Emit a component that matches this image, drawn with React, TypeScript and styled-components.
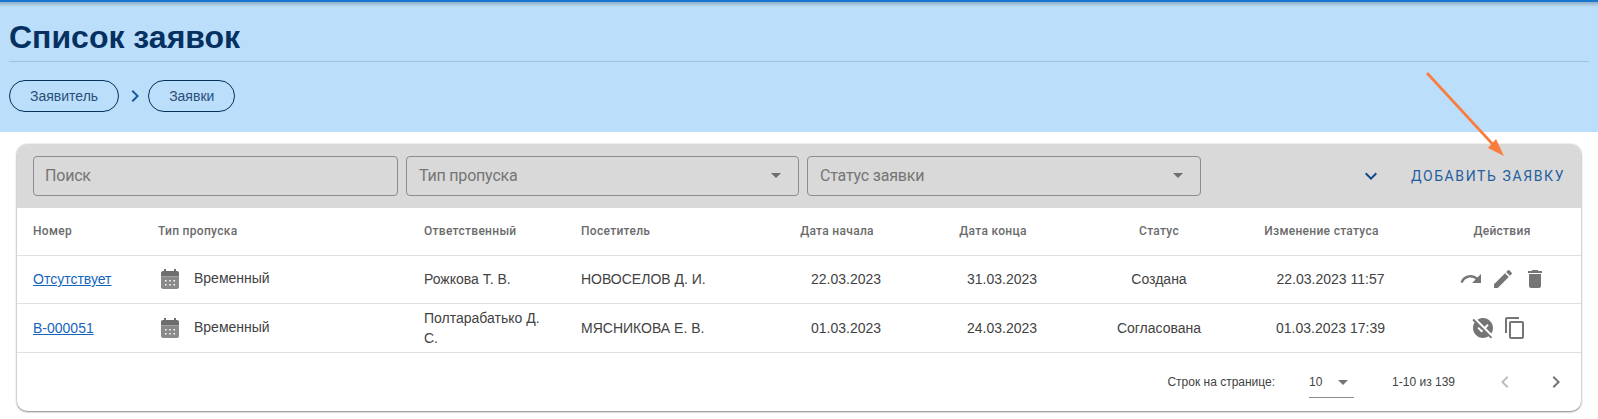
import styled, { createGlobalStyle } from 'styled-components';

const GlobalStyle = createGlobalStyle`
  html, body {
    margin: 0;
    padding: 0;
    background: #fff;
    font-family: 'Liberation Sans', Arial, sans-serif;
  }
`;

const REDO =
  'M18.4 10.6C16.55 8.99 14.15 8 11.5 8c-4.65 0-8.58 3.03-9.96 7.22L3.9 16c1.05-3.19 4.05-5.5 7.6-5.5 1.95 0 3.73.72 5.12 1.88L13 16h9V7l-3.6 3.6z';
const EDIT =
  'M3 17.25V21h3.75L17.81 9.94l-3.75-3.75L3 17.25zM20.71 7.04c.39-.39.39-1.02 0-1.41l-2.34-2.34a.9959.9959 0 0 0-1.41 0l-1.83 1.83 3.75 3.75 1.83-1.83z';
const DELETE = 'M6 19c0 1.1.9 2 2 2h8c1.1 0 2-.9 2-2V7H6v12zM19 4h-3.5l-1-1h-5l-1 1H5v2h14V4z';
const COPY =
  'M16 1H4c-1.1 0-2 .9-2 2v14h2V3h12V1zm3 4H8c-1.1 0-2 .9-2 2v14c0 1.1.9 2 2 2h11c1.1 0 2-.9 2-2V7c0-1.1-.9-2-2-2zm0 16H8V7h11v14z';
const UNPUBLISHED =
  'M21.19 21.19 2.81 2.81 1.39 4.22l2.27 2.27C2.61 8.07 2 9.96 2 12c0 5.52 4.48 10 10 10 2.04 0 3.93-.61 5.51-1.66l2.27 2.27 1.41-1.42zm-10.6-4.59-4.24-4.24 1.41-1.41 2.83 2.83.18-.18 1.41 1.41-1.59 1.59zm3-5.84-7.1-7.1C8.07 2.61 9.96 2 12 2c5.52 0 10 4.48 10 10 0 2.04-.61 3.93-1.66 5.51L15 12.17l2.65-2.65-1.41-1.41-2.65 2.65z';

const Icon = ({ d, size = 24, color = '#757575' }: { d: string; size?: number; color?: string }) => (
  <svg width={size} height={size} viewBox="0 0 24 24" fill={color}>
    <path d={d} />
  </svg>
);

// верх темнее, тело светлее, как в макете
const CalendarIcon = () => (
  <svg width="24" height="24" viewBox="0 0 24 24">
    <path d="M19 4h-1V2h-2v2H8V2H6v2H5c-1.1 0-2 .9-2 2v3.5h18V6c0-1.1-.9-2-2-2z" fill="#6e6e6e" />
    <path
      d="M3 9.5V20c0 1.1.9 2 2 2h14c1.1 0 2-.9 2-2V9.5zm5.5 5H7V13h1.5zm4.25 0h-1.5V13h1.5zm4.25 0h-1.5V13H17zm-8.5 4H7V17h1.5zm4.25 0h-1.5V17h1.5zm4.25 0h-1.5V17H17z"
      fill="#8a8a8a"
      fillRule="evenodd"
    />
  </svg>
);

const columns = [125, 266, 157, 203, 156, 156, 158, 185, 158];

const rows = [
  {
    id: 'Отсутствует',
    person: 'Рожкова Т. В.',
    visitor: 'НОВОСЕЛОВ Д. И.',
    from: '22.03.2023',
    to: '31.03.2023',
    status: 'Создана',
    changed: '22.03.2023 11:57',
    actions: [REDO, EDIT, DELETE],
  },
  {
    id: 'В-000051',
    person: 'Полтарабатько Д. С.',
    visitor: 'МЯСНИКОВА Е. В.',
    from: '01.03.2023',
    to: '24.03.2023',
    status: 'Согласована',
    changed: '01.03.2023 17:39',
    actions: [UNPUBLISHED, COPY],
  },
];

const App = () => (
  <Styled.Page>
    <GlobalStyle />
    <Styled.Hero>
      <Styled.Title>Список заявок</Styled.Title>
      <Styled.Crumbs>
        <Styled.Chip>Заявитель</Styled.Chip>
        <svg width="24" height="24" viewBox="0 0 24 24" fill="#1a5a9c">
          <path d="M10 6 8.59 7.41 13.17 12l-4.58 4.59L10 18l6-6z" />
        </svg>
        <Styled.Chip>Заявки</Styled.Chip>
      </Styled.Crumbs>
    </Styled.Hero>
    <Styled.Card>
      <Styled.Toolbar>
        <Styled.Search>Поиск</Styled.Search>
        <Styled.Select $width={393}>
          Тип пропуска
          <Styled.Caret />
        </Styled.Select>
        <Styled.Select $width={394}>
          Статус заявки
          <Styled.Caret />
        </Styled.Select>
        <Styled.Expand>
          <svg width="24" height="24" viewBox="0 0 24 24" fill="#0d4a8a">
            <path d="M7.41 8.59 12 13.17l4.59-4.58L18 10l-6 6-6-6z" />
          </svg>
        </Styled.Expand>
        <Styled.AddButton>Добавить заявку</Styled.AddButton>
      </Styled.Toolbar>
      <Styled.Table>
        <colgroup>
          {columns.map((w, i) => (
            <col key={i} style={{ width: w }} />
          ))}
        </colgroup>
        <thead>
          <tr>
            <Styled.Th>Номер</Styled.Th>
            <Styled.Th>Тип пропуска</Styled.Th>
            <Styled.Th>Ответственный</Styled.Th>
            <Styled.Th>Посетитель</Styled.Th>
            <Styled.Th $center $sortable>Дата начала</Styled.Th>
            <Styled.Th $center $sortable>Дата конца</Styled.Th>
            <Styled.Th $center>Статус</Styled.Th>
            <Styled.Th $center $sortable>Изменение статуса</Styled.Th>
            <Styled.Th $center>Действия</Styled.Th>
          </tr>
        </thead>
        <tbody>
          {rows.map((row) => (
            <tr key={row.id}>
              <Styled.Td>
                <Styled.Link href="#">{row.id}</Styled.Link>
              </Styled.Td>
              <Styled.Td>
                <Styled.PassType>
                  <CalendarIcon />
                  <span>Временный</span>
                </Styled.PassType>
              </Styled.Td>
              <Styled.Td>{row.person}</Styled.Td>
              <Styled.Td>{row.visitor}</Styled.Td>
              <Styled.Td $center>{row.from}</Styled.Td>
              <Styled.Td $center>{row.to}</Styled.Td>
              <Styled.Td $center>{row.status}</Styled.Td>
              <Styled.Td $center>{row.changed}</Styled.Td>
              <Styled.Td $center>
                <Styled.Actions $compact={row.actions.length < 3}>
                  {row.actions.map((d) => (
                    <Icon key={d} d={d} />
                  ))}
                </Styled.Actions>
              </Styled.Td>
            </tr>
          ))}
        </tbody>
      </Styled.Table>
      <Styled.Pager>
        <span>Строк на странице:</span>
        <Styled.PageSize>
          10
          <svg width="24" height="24" viewBox="0 0 24 24" fill="#757575">
            <path d="m7 10 5 5 5-5z" />
          </svg>
        </Styled.PageSize>
        <Styled.Range>1-10 из 139</Styled.Range>
        <Styled.PageButtons>
          <svg width="24" height="24" viewBox="0 0 24 24" fill="#bdbdbd">
            <path d="M15.41 7.41 14 6l-6 6 6 6 1.41-1.41L10.83 12z" />
          </svg>
          <svg width="24" height="24" viewBox="0 0 24 24" fill="#757575">
            <path d="M10 6 8.59 7.41 13.17 12l-4.58 4.59L10 18l6-6z" />
          </svg>
        </Styled.PageButtons>
      </Styled.Pager>
    </Styled.Card>
    <Styled.Arrow width="100" height="100" viewBox="0 0 100 100">
      <line x1="7" y1="3" x2="78" y2="80" stroke="#fb7c3c" strokeWidth="2.6" />
      <polygon points="84,86 68,78 76,69" fill="#fb7c3c" />
    </Styled.Arrow>
  </Styled.Page>
);

export default App;

const Styled = {
  Page: styled.div`
    position: relative;
    width: 1598px;
    height: 419px;
    overflow: hidden;
    background: #fff;
  `,
  Hero: styled.header`
    box-sizing: border-box;
    height: 132px;
    padding: 0 9px;
    background: linear-gradient(rgba(0, 0, 0, 0.22), rgba(0, 0, 0, 0) 5px), #bbdefb;
    border-top: 2px solid #1976d2;
  `,
  Title: styled.h1`
    margin: 0;
    padding-top: 16px;
    height: 43px;
    border-bottom: 1px solid #9dc3e6;
    font-size: 32px;
    line-height: 39px;
    font-weight: 700;
    color: #05305f;
  `,
  Crumbs: styled.div`
    display: flex;
    align-items: center;
    margin-top: 18px;
    svg {
      margin: 0 1px 0 4px;
    }
  `,
  Chip: styled.span`
    display: inline-flex;
    align-items: center;
    justify-content: center;
    box-sizing: border-box;
    height: 32px;
    padding: 0 20px;
    border: 1px solid #05305f;
    border-radius: 16px;
    font-size: 14px;
    color: #2a4f78;
  `,
  Card: styled.section`
    box-sizing: border-box;
    width: 1564px;
    height: 267px;
    margin: 12px 0 0 17px;
    border-radius: 10px;
    background: #fff;
    overflow: hidden;
    box-shadow: 0 1px 2px rgba(0, 0, 0, 0.45), 1px 0 2px rgba(0, 0, 0, 0.08), -1px 0 2px rgba(0, 0, 0, 0.08);
  `,
  Toolbar: styled.div`
    display: flex;
    align-items: center;
    height: 64px;
    padding-left: 16px;
    background: #d9d9d9;
  `,
  Search: styled.div`
    box-sizing: border-box;
    display: flex;
    align-items: center;
    width: 365px;
    height: 40px;
    margin-right: 8px;
    padding: 0 11px 2px;
    border: 1px solid #8c8c8c;
    border-radius: 4px;
    font-family: Roboto, sans-serif;
    font-size: 16px;
    letter-spacing: -0.2px;
    color: #757575;
  `,
  Select: styled.div<{ $width: number }>`
    position: relative;
    box-sizing: border-box;
    display: flex;
    align-items: center;
    width: ${(p) => p.$width}px;
    height: 40px;
    margin-right: 8px;
    padding: 0 12px 2px;
    border: 1px solid #8c8c8c;
    border-radius: 4px;
    font-family: Roboto, sans-serif;
    font-size: 16px;
    letter-spacing: -0.2px;
    color: #757575;
  `,
  Caret: styled.i`
    position: absolute;
    right: 17px;
    top: 16px;
    border-left: 5px solid transparent;
    border-right: 5px solid transparent;
    border-top: 5px solid #6f6f6f;
  `,
  Expand: styled.div`
    display: flex;
    margin-left: 150px;
  `,
  AddButton: styled.button`
    margin-left: 28px;
    padding: 0;
    border: 0;
    background: none;
    font-family: Roboto, sans-serif;
    font-size: 14px;
    letter-spacing: 1.6px;
    text-transform: uppercase;
    color: #1f5f9f;
  `,
  Table: styled.table`
    width: 1564px;
    table-layout: fixed;
    border-collapse: collapse;
  `,
  Th: styled.th<{ $center?: boolean; $sortable?: boolean }>`
    height: 47px;
    padding: 0 ${(p) => (p.$sortable ? 34 : 16)}px 0 16px;
    border-bottom: 1px solid #e0e0e0;
    box-sizing: border-box;
    text-align: ${(p) => (p.$center ? 'center' : 'left')};
    font-family: Roboto, sans-serif;
    font-size: 12px;
    font-weight: 500;
    letter-spacing: 0.3px;
    color: #6b6b6b;
  `,
  Td: styled.td<{ $center?: boolean }>`
    height: 48px;
    padding: 4px 16px;
    border-bottom: 1px solid #e0e0e0;
    box-sizing: border-box;
    text-align: ${(p) => (p.$center ? 'center' : 'left')};
    font-size: 14px;
    line-height: 20px;
    color: #424242;
  `,
  Link: styled.a`
    color: #1565c0;
  `,
  PassType: styled.div`
    display: flex;
    align-items: center;
    gap: 12px;
    span {
      margin-top: -2px;
    }
  `,
  Actions: styled.div<{ $compact?: boolean }>`
    display: flex;
    justify-content: center;
    gap: 8px;
    padding: ${(p) => (p.$compact ? '0 6px 0 0' : '0 0 0 1px')};
  `,
  Pager: styled.div`
    display: flex;
    align-items: center;
    justify-content: flex-end;
    height: 59px;
    font-size: 12px;
    color: #424242;
  `,
  PageSize: styled.div`
    display: flex;
    align-items: center;
    justify-content: space-between;
    box-sizing: border-box;
    width: 45px;
    height: 32px;
    margin-left: 34px;
    border-bottom: 1px solid #8c8c8c;
    svg {
      margin-right: -1px;
    }
  `,
  Range: styled.span`
    margin-left: 38px;
  `,
  PageButtons: styled.div`
    display: flex;
    gap: 27px;
    margin: 0 13px 0 38px;
  `,
  Arrow: styled.svg`
    position: absolute;
    left: 1420px;
    top: 70px;
    pointer-events: none;
  `,
};
